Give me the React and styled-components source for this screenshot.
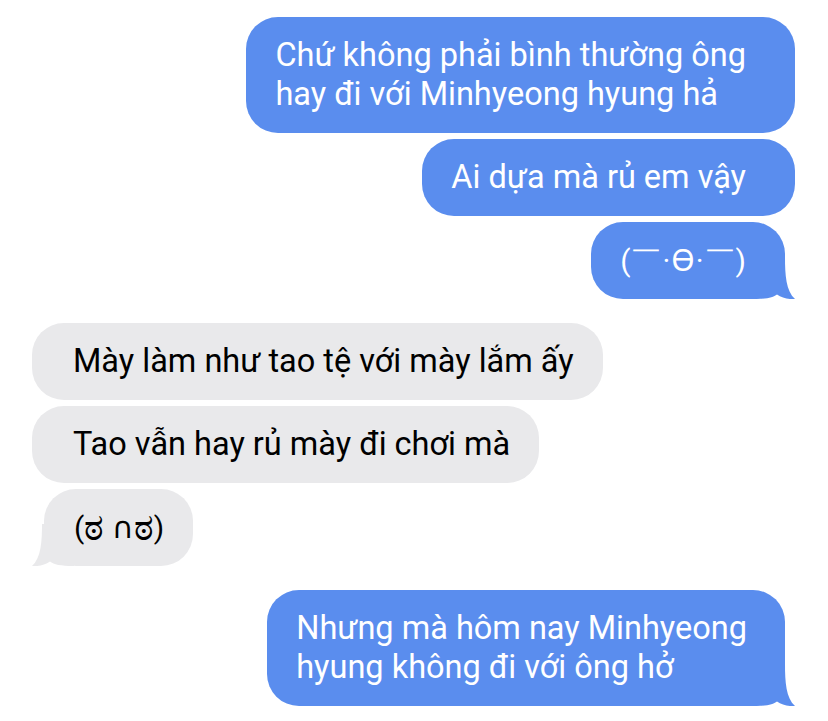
import styled, { createGlobalStyle } from "styled-components";

const Global = createGlobalStyle`
  html, body {
    margin: 0;
    padding: 0;
    background: #ffffff;
  }
  body {
    font-family: Roboto, "Noto Sans", "DejaVu Sans", sans-serif;
    -webkit-font-smoothing: antialiased;
  }
`

const Thread = styled.div`
  width: 828px;
  height: 721px;
  box-sizing: border-box;
  padding: 17px 33px 0 32px;
  display: flex;
  flex-direction: column;
  gap: 24px;
  overflow: hidden;
`

const Group = styled.div`
  display: flex;
  flex-direction: column;
  align-items: ${p => (p.$mine ? "flex-end" : "flex-start")};
  gap: 6px;
`

const Bubble = styled.div`
  position: relative;
  box-sizing: border-box;
  font-size: 32.5px;
  line-height: 39px;
  white-space: pre-line;
  padding: 19px 29px;
  border-radius: 32px;
  background: ${p => (p.$mine ? "#5a8dee" : "#e9e9eb")};
  color: ${p => (p.$mine ? "#ffffff" : "#000000")};
  ${p => p.$mine && !p.$tail && "padding-right: 49px;"}
  ${p => !p.$mine && !p.$tail && "padding-left: 41px;"}
  ${p => p.$mine && p.$tail && "margin-right: 10px; padding-right: 38px;"}
  ${p => !p.$mine && p.$tail && "margin-left: 12px; padding-left: 30px;"}
`

const Face = styled.span`
  font-size: 30px;
  letter-spacing: ${p => p.$tight ? "0" : "1px"};
`

const Eye = styled.span`
  font-size: 37px;
  line-height: 30px;
  display: inline-block;
  vertical-align: -2px;
`

const TailSvg = styled.svg`
  position: absolute;
  bottom: 0;
  width: 42px;
  height: 42px;
  ${p => (p.$mine ? "right: -10px;" : "left: -12px; transform: scaleX(-1);")}
`

const Tail = ({ mine }) => (
  <TailSvg $mine={mine} viewBox="0 0 42 42">
    <path
      d="M0 0 H32 C32 18 33 34 42 42 C36 42.6 29 41 24 37.5 C20 40.5 14 42 0 42 Z"
      fill={mine ? "#5a8dee" : "#e9e9eb"}
    />
  </TailSvg>
)

const Msg = ({ mine, tail, children }) => (
  <Bubble $mine={mine} $tail={tail}>
    {children}
    {tail && <Tail mine={mine} />}
  </Bubble>
)

export default function App() {
  return (
    <>
      <Global />
      <Thread>
        <Group $mine>
          <Msg mine>{"Chứ không phải bình thường ông\nhay đi với Minhyeong hyung hả"}</Msg>
          <Msg mine>Ai dựa mà rủ em vậy</Msg>
          <Msg mine tail><Face>(￣·ϴ·￣)</Face></Msg>
        </Group>
        <Group>
          <Msg>Mày làm như tao tệ với mày lắm ấy</Msg>
          <Msg>Tao vẫn hay rủ mày đi chơi mà</Msg>
          <Msg tail><Face $tight>(<Eye>ಠ</Eye> ∩<Eye>ಠ</Eye>)</Face></Msg>
        </Group>
        <Group $mine>
          <Msg mine tail>{"Nhưng mà hôm nay Minhyeong\nhyung không đi với ông hở"}</Msg>
        </Group>
      </Thread>
    </>
  )
}
